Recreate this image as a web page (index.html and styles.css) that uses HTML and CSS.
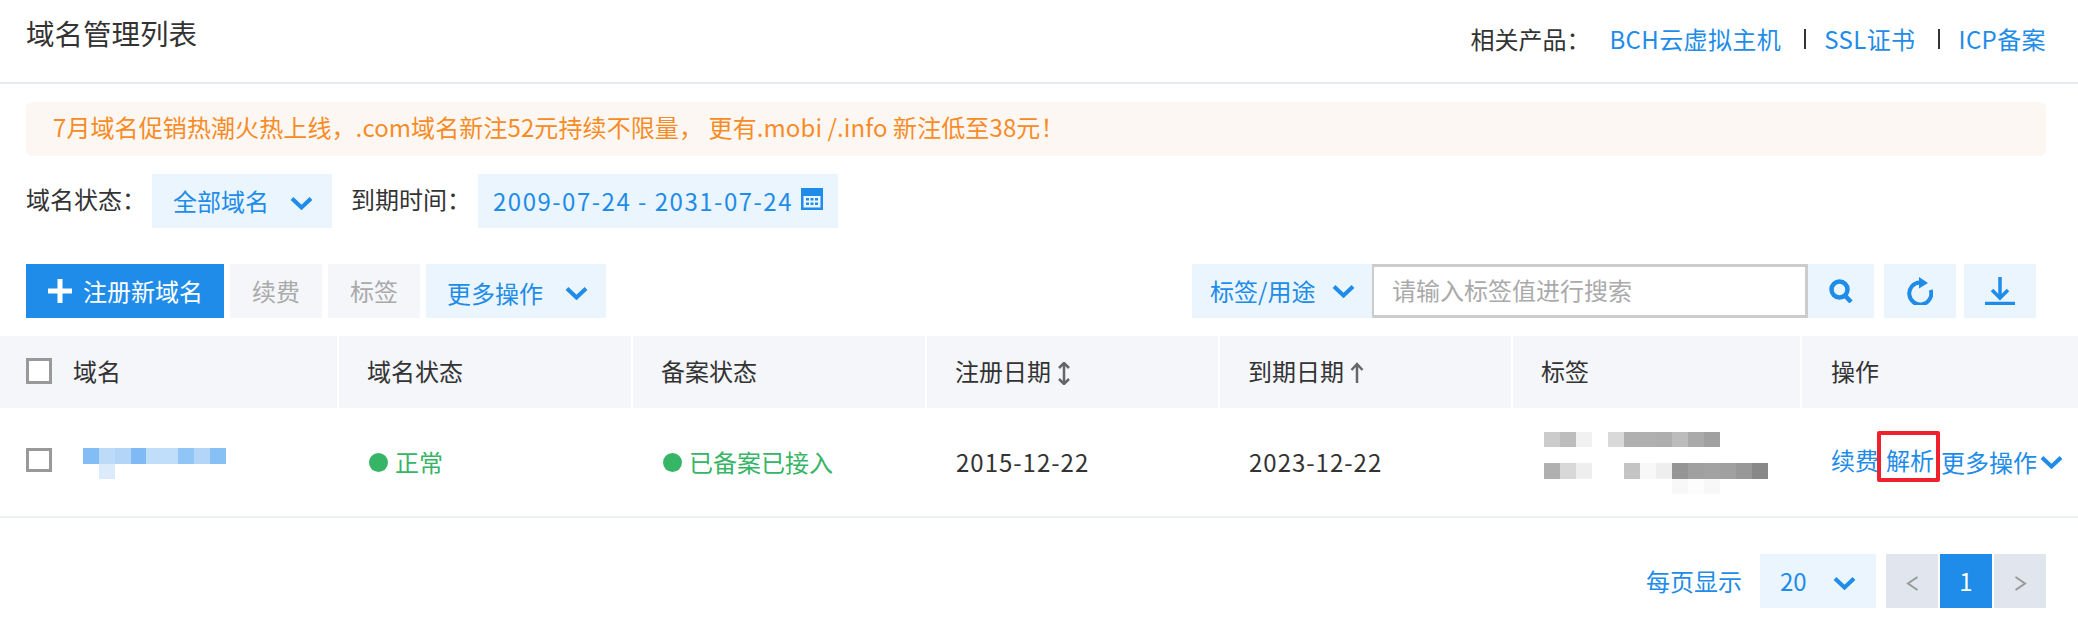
FILE: index.html
```html
<!DOCTYPE html>
<html lang="zh-CN">

<head>
    <meta charset="UTF-8">
    <title>域名管理列表</title>
    <link rel="stylesheet" href="styles.css">
</head>

<body>
    <svg class="sprites" width="0" height="0">
        <symbol id="chevron" viewBox="0 0 23 13">
            <path d="M2 1.500 L11.500 10.500 L21 1.500" fill="none" stroke="currentColor" stroke-width="4" />
        </symbol>
    </svg>

    <!-- Header -->
    <header class="page-head">
        <h1>域名管理列表</h1>
        <div class="related">
            <span class="related-label">相关产品：</span>
            <a href="#">BCH云虚拟主机</a>
            <i class="bar"></i>
            <a href="#">SSL证书</a>
            <i class="bar"></i>
            <a href="#">ICP备案</a>
        </div>
    </header>

    <div class="notice">7月域名促销热潮火热上线，.com域名新注52元持续不限量， 更有.mobi /.info 新注低至38元！</div>

    <!-- Filters -->
    <div class="filters">
        <label class="filter-label">域名状态：</label>
        <div class="box select-status">全部域名
            <svg class="chevron"><use href="#chevron" /></svg>
        </div>
        <label class="filter-label">到期时间：</label>
        <div class="box select-date"><span class="date-range">2009-07-24 - 2031-07-24</span>
            <svg class="calendar" viewBox="0 0 22 22">
                <path d="M0 0H22V22H0Z M2.500 8V19.500H19.500V8Z" fill="currentColor" fill-rule="evenodd" />
                <path d="M5 10h3v2.500H5z M9.500 10h3v2.500h-3z M14 10h3v2.500h-3z M5 14.500h3V17H5z M9.500 14.500h3V17h-3z M14 14.500h3V17h-3z" fill="currentColor" />
            </svg>
        </div>
    </div>

    <!-- Toolbar -->
    <div class="toolbar">
        <div class="toolbar-left">
            <button class="btn-primary">
                <svg class="plus" viewBox="0 0 24 24"><path d="M12 0V24M0 12H24" stroke="currentColor" stroke-width="5" /></svg>
                注册新域名
            </button>
            <button class="btn-disabled">续费</button>
            <button class="btn-disabled">标签</button>
            <div class="box select-more">更多操作
                <svg class="chevron"><use href="#chevron" /></svg>
            </div>
        </div>
        <div class="toolbar-right">
            <div class="box select-tag">标签/用途
                <svg class="chevron"><use href="#chevron" /></svg>
            </div>
            <input class="search-input" type="text" placeholder="请输入标签值进行搜索">
            <div class="box icon-btn search-btn">
                <svg width="24" height="24" viewBox="0 0 24 24">
                    <circle cx="10.500" cy="10.500" r="8" fill="none" stroke="currentColor" stroke-width="4.500" />
                    <path d="M15.500 16 L22 23" stroke="currentColor" stroke-width="4.500" />
                </svg>
            </div>
            <div class="box icon-btn refresh-btn">
                <svg width="26" height="28" viewBox="0 0 26 28">
                    <path d="M23.700 13 A11 11 0 1 1 13 5.500" fill="none" stroke="currentColor" stroke-width="4" />
                    <path d="M12 0 L21 6 L12 11.500Z" fill="currentColor" />
                </svg>
            </div>
            <div class="box icon-btn download-btn">
                <svg width="30" height="28" viewBox="0 0 30 28">
                    <path d="M15 0V20" stroke="currentColor" stroke-width="3.500" />
                    <path d="M7 13 L15 21 L23 13" fill="none" stroke="currentColor" stroke-width="3.500" />
                    <path d="M0 26.500H30" stroke="currentColor" stroke-width="3.500" />
                </svg>
            </div>
        </div>
    </div>

    <!-- Domain table -->
    <div class="table">
        <div class="table-row table-head">
            <div class="cell first"><span class="checkbox"></span>域名</div>
            <div class="cell">域名状态</div>
            <div class="cell">备案状态</div>
            <div class="cell">注册日期
                <svg class="sort" viewBox="0 0 14 23">
                    <path d="M7 1V22M2 6 L7 1 L12 6M2 17 L7 22 L12 17" fill="none" stroke="currentColor" stroke-width="2.500" />
                </svg>
            </div>
            <div class="cell">到期日期
                <svg class="sort" viewBox="0 0 14 23">
                    <path d="M7 2V21M1.500 8 L7 2 L12.500 8" fill="none" stroke="currentColor" stroke-width="2.500" />
                </svg>
            </div>
            <div class="cell">标签</div>
            <div class="cell cell-ops">操作</div>
        </div>
        <div class="table-row table-body">
            <div class="cell first">
                <span class="checkbox checkbox-row"></span>
                <div class="mosaic-name">
                    <div class="name-top"></div>
                    <div class="name-bottom"></div>
                </div>
            </div>
            <div class="cell status"><i class="dot"></i>正常</div>
            <div class="cell status"><i class="dot"></i>已备案已接入</div>
            <div class="cell num">2015-12-22</div>
            <div class="cell num">2023-12-22</div>
            <div class="cell">
                <div class="mosaic-tags">
                    <div class="tag-one"></div>
                    <div class="tag-two"></div>
                    <div class="tag-three"></div>
                </div>
            </div>
            <div class="cell cell-ops ops">
                <a href="#" class="renew">续费</a>
                <a href="#" class="marked">解析</a>
                <a href="#" class="more">更多操作</a>
                <svg class="chevron"><use href="#chevron" /></svg>
            </div>
        </div>
    </div>

    <!-- Pagination -->
    <div class="pager">
        <span class="pager-label">每页显示</span>
        <div class="box select-size">20
            <svg class="chevron"><use href="#chevron" /></svg>
        </div>
        <div class="pages">
            <div class="page-btn">
                <svg class="page-arrow" viewBox="0 0 13 15"><path d="M11.500 1 L2 7.500 L11.500 14" fill="none" stroke="currentColor" stroke-width="2" /></svg>
            </div>
            <div class="page-btn current">1</div>
            <div class="page-btn">
                <svg class="page-arrow" viewBox="0 0 13 15"><path d="M1.500 1 L11 7.500 L1.500 14" fill="none" stroke="currentColor" stroke-width="2" /></svg>
            </div>
        </div>
    </div>
</body>

</html>
```

FILE: styles.css
```css
* {
    box-sizing: border-box;
}

body {
    margin: 0;
    height: 624px;
    overflow: hidden;
    font-family: "Noto Sans CJK SC", "Noto Sans", sans-serif;
    font-size: 24px;
    line-height: 32px;
    color: #333;
    background-color: #fff;
}

a {
    color: #1e8ce8;
    text-decoration: none;
}

.sprites {
    position: absolute;
}

.num {
    letter-spacing: 1px;
}

/* Header */
.page-head {
    height: 84px;
    padding: 15px 32px 0 26px;
    border-bottom: 2px solid #e6ebf0;
    display: flex;
    justify-content: space-between;
}

.page-head h1 {
    margin: 0;
    font-size: 28.5px;
    line-height: 36px;
    font-weight: 400;
}

.related {
    display: flex;
    align-items: center;
    height: 47px;
}

.related a {
    letter-spacing: 0.4px;
}

.related-label {
    width: 139px;
}

.bar {
    width: 2px;
    height: 20px;
    margin: 0 18px 0 23px;
    background-color: #333;
}

/* Notice */
.notice {
    height: 54px;
    margin: 18px 32px 0 26px;
    padding-left: 27px;
    line-height: 50px;
    letter-spacing: 0.1px;
    color: #f78c27;
    background-color: #fcf7f3;
    border-radius: 6px;
}

/* Shared light blue box */
.box {
    height: 54px;
    display: flex;
    align-items: center;
    color: #1e8ce8;
    background-color: #eaf5fe;
}

.chevron {
    width: 23px;
    height: 13px;
    flex-shrink: 0;
    color: #1e8ce8;
}

/* Filters */
.filters {
    display: flex;
    align-items: center;
    margin: 18px 0 0 26px;
}

.filter-label {
    width: 126px;
    margin-top: -4px;
}

.select-status {
    width: 180px;
    margin-right: 19px;
    padding-left: 21px;
}

.select-status .chevron {
    margin: 5px 0 0 21px;
}

.select-date {
    width: 360px;
    padding-left: 15px;
    margin-left: 1px;
}

.date-range {
    letter-spacing: 1.5px;
}

.calendar {
    width: 22px;
    height: 22px;
    margin: -5px 0 0 8px;
}

/* Toolbar */
.toolbar {
    display: flex;
    justify-content: space-between;
    margin: 36px 42px 0 26px;
}

.toolbar-left,
.toolbar-right {
    display: flex;
}

.toolbar-left {
    gap: 6px;
}

.toolbar button {
    height: 54px;
    padding: 0;
    border: none;
    font: inherit;
}

.btn-primary {
    width: 198px;
    display: flex;
    align-items: center;
    padding-left: 22px !important;
    color: #fff;
    background-color: #1e8ce8;
}

.plus {
    width: 24px;
    height: 24px;
    margin-right: 11px;
}

.btn-disabled {
    width: 92px;
    color: #aaa;
    background-color: #f4f6fa;
}

.select-more {
    width: 180px;
    padding: 4px 0 0 21px;
}

.select-more .chevron {
    margin: 1px 0 0 22px;
}

.select-tag {
    width: 180px;
    padding-left: 18px;
}

.select-tag .chevron {
    margin-left: 17px;
}

.search-input {
    width: 436px;
    height: 54px;
    padding: 0 0 4px 18px;
    border: 3px solid #ccc;
    border-left-width: 2px;
    font: inherit;
    color: #333;
    outline: none;
}

.search-input::placeholder {
    color: #aaa;
}

.icon-btn {
    justify-content: center;
}

.search-btn {
    width: 66px;
}

.refresh-btn {
    width: 72px;
    margin-left: 10px;
}

.download-btn {
    width: 72px;
    margin-left: 8px;
}

/* Table */
.table {
    margin-top: 18px;
}

.table-row {
    display: grid;
    grid-template-columns: 339px 294px 294px 293px 293px 289px 1fr;
}

.table-head {
    height: 72px;
    background-color: #f4f6fa;
}

.table-body {
    height: 110px;
    border-bottom: 2px solid #edf0f7;
}

.cell {
    display: flex;
    align-items: center;
    padding-left: 28px;
    border-right: 2px solid #fff;
}

.first {
    padding-left: 26px;
}

.cell-ops {
    padding-left: 29px;
    border-right: none;
}

.table-head .cell {
    padding-bottom: 2px;
}

.checkbox {
    width: 26px;
    height: 26px;
    margin-right: 21px;
    border: 3px solid #999;
    background-color: #fff;
}

.checkbox-row {
    height: 24px;
    margin-top: -4px;
    margin-right: 31px;
}

.sort {
    width: 14px;
    height: 23px;
    margin: 4px 0 0 6px;
    color: #666;
}

.status {
    color: #35b565;
    padding-left: 30px;
}

.dot {
    width: 19px;
    height: 19px;
    margin-right: 7px;
    border-radius: 50%;
    background-color: #35b565;
}

.table-body .num {
    padding-left: 29px;
}

/* Blurred mosaics */
.mosaic-name {
    width: 143px;
    height: 31px;
    margin-top: 3px;
}

.name-top {
    height: 16px;
    background: linear-gradient(90deg,
            #82bdf5 0 11.1%, #bddbf9 0 22.2%, #b3d5f8 0 33.3%, #7fbaf4 0 44.4%,
            #c0ddf9 0 66.6%, #90c5f6 0 77.7%, #b3d5f8 0 88.8%, #87c0f5 0);
}

.name-bottom {
    width: 16px;
    height: 15px;
    margin-left: 16px;
    background-color: #dcebfc;
}

.mosaic-tags {
    width: 224px;
    height: 62px;
    margin: 0 0 -1px 3px;
}

.tag-one {
    width: 176px;
    height: 15px;
    background: linear-gradient(90deg,
            #cbcbcb 0 9.1%, #bdbdbd 0 18.2%, #f1f1f1 0 27.3%, #fff 0 36.4%,
            #d9d9d9 0 45.5%, #b0b0b0 0 54.6%, #b0b0b0 0 63.7%, #aeaeae 0 72.8%,
            #bcbcbc 0 81.9%, #aaa 0 91%, #a0a0a0 0);
}

.tag-two {
    height: 16px;
    margin-top: 16px;
    background: linear-gradient(90deg,
            #b0b0b0 0 7.14%, #d8d8d8 0 14.28%, #eee 0 21.42%, #fff 0 35.7%,
            #c4c4c4 0 42.84%, #f8f8f8 0 49.98%, #eee 0 57.12%, #959595 0 64.26%,
            #a0a0a0 0 71.4%, #a2a2a2 0 78.54%, #a0a0a0 0 85.68%, #989898 0 92.82%, #888 0);
}

.tag-three {
    width: 48px;
    height: 15px;
    margin-left: 128px;
    background: linear-gradient(90deg, #f8f8f8 0 33.3%, #fdfdfd 0 66.6%, #f8f8f8 0);
}

/* Row actions */
.ops a {
    margin-right: 7px;
    padding-bottom: 4px;
}

.ops a.more {
    margin-right: 3px;
    padding: 0;
}

.marked {
    position: relative;
}

.marked::after {
    content: "";
    position: absolute;
    top: -13px;
    bottom: -2px;
    left: -9px;
    right: -6px;
    border: 4px solid #f0202e;
    border-radius: 2px;
}

/* Pagination */
.pager {
    display: flex;
    justify-content: flex-end;
    align-items: center;
    margin: 36px 32px 0 0;
}

.pager-label {
    margin-right: 18px;
    color: #1e8ce8;
}

.select-size {
    width: 116px;
    padding-left: 20px;
}

.select-size .chevron {
    margin: 5px 0 0 26px;
}

.pages {
    display: flex;
    gap: 2px;
    margin-left: 10px;
}

.page-btn {
    width: 52px;
    height: 54px;
    display: flex;
    align-items: center;
    justify-content: center;
    color: #999;
    background-color: #e1e5ee;
}

.page-btn.current {
    color: #fff;
    background-color: #1e8ce8;
}

.page-arrow {
    width: 13px;
    height: 15px;
    margin-top: 4px;
}
```
